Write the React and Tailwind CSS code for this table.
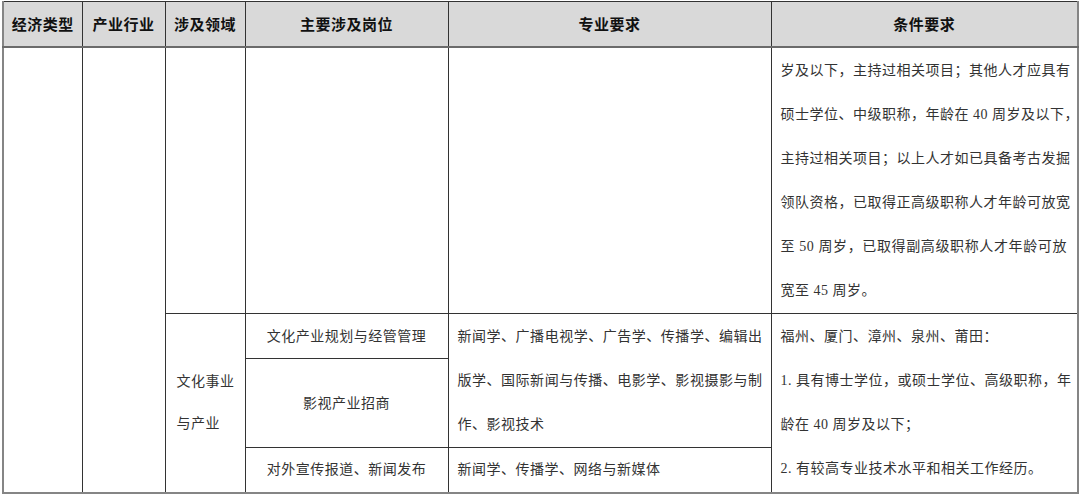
import React from "react";

const body = '"Liberation Serif", "Noto Sans CJK SC", serif';
const head = '"Noto Sans CJK SC", "Liberation Sans", sans-serif';

// one printed line; full lines are stretched edge to edge like the Word source
function Line({ children, full }) {
  return (
    <div
      className={
        full
          ? "whitespace-nowrap text-justify [text-align-last:justify]"
          : "whitespace-nowrap"
      }
    >
      {children}
    </div>
  );
}

const th =
  "border border-[#333] border-b-2 border-b-[#6b6b6b] bg-[#d9d9d9] text-center align-middle text-[15px] font-bold text-[#111] tracking-[0.5px]";
const td = "border border-[#333] text-[14px] text-[#333] tracking-[0.5px]";

export default function App() {
  return (
    <div className="w-[1080px] h-[496px] bg-white overflow-hidden pt-px" lang="zh-CN">
      <table
        className="table-fixed border-collapse ml-[2px] w-[1075px] border-x-2 border-b-2 border-[#858585] border-t border-t-[#333]"
        style={{ fontFamily: body }}
      >
        <colgroup>
          <col className="w-[79px]" />
          <col className="w-[83px]" />
          <col className="w-[80px]" />
          <col className="w-[203px]" />
          <col className="w-[323px]" />
          <col className="w-[307px]" />
        </colgroup>
        <thead>
          <tr className="h-[45px]" style={{ fontFamily: head }}>
            <th className={th}>经济类型</th>
            <th className={th}>产业行业</th>
            <th className={th}>涉及领域</th>
            <th className={th}>主要涉及岗位</th>
            <th className={th}>专业要求</th>
            <th className={th}>条件要求</th>
          </tr>
        </thead>
        <tbody>
          <tr className="h-[267px]">
            <td className={td} rowSpan={4}></td>
            <td className={td} rowSpan={4}></td>
            <td className={td}></td>
            <td className={td}></td>
            <td className={td}></td>
            <td className={`${td} align-top leading-[44px] pl-[9px] pr-[10px] pt-px`}>
              <Line full>岁及以下，主持过相关项目；其他人才应具有</Line>
              <Line full>硕士学位、中级职称，年龄在 40 周岁及以下，</Line>
              <Line full>主持过相关项目；以上人才如已具备考古发掘</Line>
              <Line full>领队资格，已取得正高级职称人才年龄可放宽</Line>
              <Line full>至 50 周岁，已取得副高级职称人才年龄可放</Line>
              <Line>宽至 45 周岁。</Line>
            </td>
          </tr>
          <tr className="h-[45px]">
            <td className={`${td} align-middle pl-[11px] leading-[42px]`} rowSpan={3}>
              <Line>文化事业</Line>
              <Line>与产业</Line>
            </td>
            <td className={`${td} align-middle text-center`}>文化产业规划与经管管理</td>
            <td className={`${td} align-top leading-[44px] pl-[9px] pr-[8px] pt-px`} rowSpan={2}>
              <Line full>新闻学、广播电视学、广告学、传播学、编辑出</Line>
              <Line full>版学、国际新闻与传播、电影学、影视摄影与制</Line>
              <Line>作、影视技术</Line>
            </td>
            <td className={`${td} align-top leading-[44px] pl-[9px] pr-[6px] pt-px`} rowSpan={3}>
              <Line>福州、厦门、漳州、泉州、莆田：</Line>
              <Line full>1. 具有博士学位，或硕士学位、高级职称，年</Line>
              <Line>龄在 40 周岁及以下；</Line>
              <Line>2. 有较高专业技术水平和相关工作经历。</Line>
            </td>
          </tr>
          <tr className="h-[89px]">
            <td className={`${td} align-middle text-center`}>影视产业招商</td>
          </tr>
          <tr className="h-[45px]">
            <td className={`${td} align-middle text-center`}>对外宣传报道、新闻发布</td>
            <td className={`${td} align-middle pl-[9px]`}>新闻学、传播学、网络与新媒体</td>
          </tr>
        </tbody>
      </table>
    </div>
  );
}
